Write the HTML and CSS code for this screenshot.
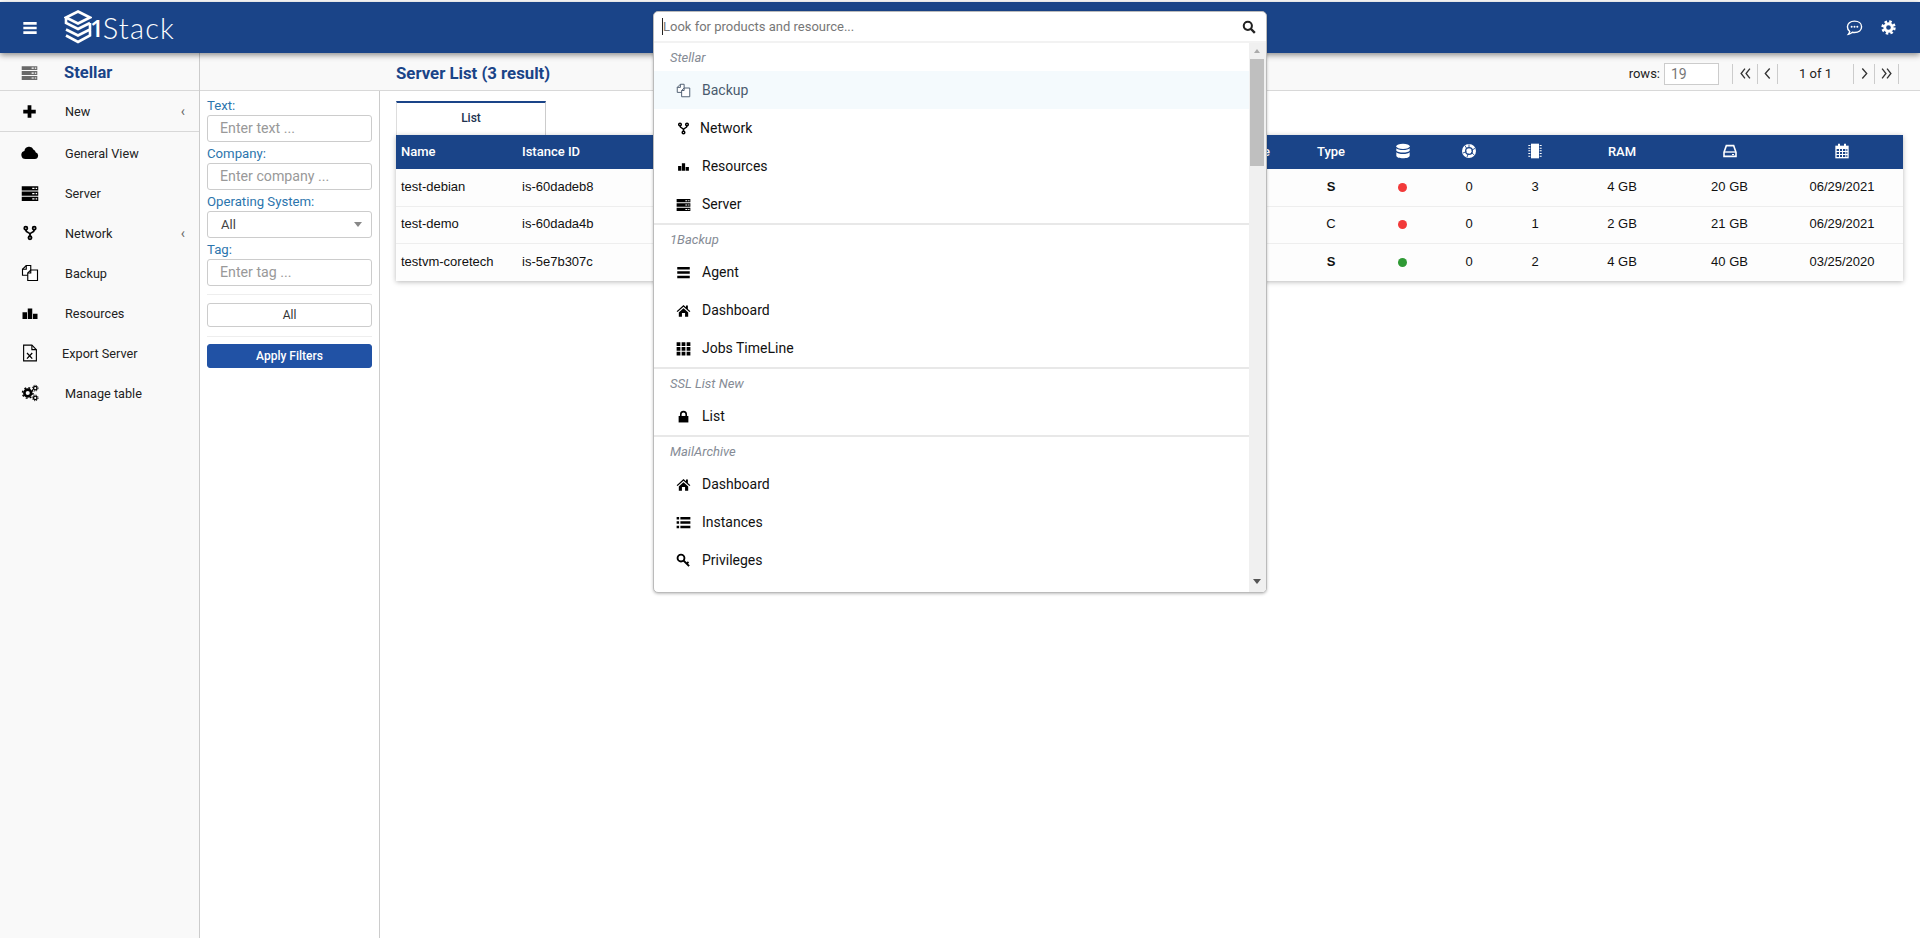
FILE: index.html
```html
<!DOCTYPE html>
<html lang="en">
<head>
<meta charset="utf-8">
<title>Server List</title>
<link rel="stylesheet" href="styles.css">
</head>
<body>
<svg class="sprite" xmlns="http://www.w3.org/2000/svg">
  <symbol id="i-server" viewBox="0 0 24 24"><path d="M1 3h22v5.500H1zM1 10h22v5.500H1zM1 17h22v5.500H1z" fill="currentColor"/><path d="M15 5h3v1.600h-3zM19.500 5h2v1.600h-2zM15 12h3v1.600h-3zM19.500 12h2v1.600h-2zM15 19h3v1.600h-3zM19.500 19h2v1.600h-2z" fill="#fff"/></symbol>
  <symbol id="i-plus" viewBox="0 0 24 24"><path d="M9 2h6v7h7v6h-7v7H9v-7H2V9h7z" fill="currentColor"/></symbol>
  <symbol id="i-cloud" viewBox="0 0 24 24"><path d="M6 20a5.500 5.500 0 0 1-1.500-10.800A6.500 6.500 0 0 1 16.800 7.500 4 4 0 0 1 19.500 11 4.600 4.600 0 0 1 18.500 20z" fill="currentColor"/></symbol>
  <symbol id="i-fork" viewBox="-3 -1 30 26"><g fill="none" stroke="currentColor" stroke-width="3"><circle cx="5" cy="4" r="2.600"/><circle cx="19" cy="4" r="2.600"/><circle cx="12" cy="20" r="2.600"/><path d="M5 6.500c0 6 7 3.500 7 8v3M19 6.500c0 6-7 3.500-7 8"/></g></symbol>
  <symbol id="i-copy" viewBox="0 0 24 24"><g fill="#fff" stroke="currentColor" stroke-width="1.500"><path d="M2 15V7l5-5h6v13z"/><path d="M7 2v5H2" fill="none"/><path d="M9 22V12l4-4h9v14z"/><path d="M13 8v4H9" fill="none"/></g></symbol>
  <symbol id="i-bars" viewBox="0 0 24 24"><path d="M2 11h6v9H2zM9 6h6v14H9zM16 13h6v7h-6z" fill="currentColor"/></symbol>
  <symbol id="i-excel" viewBox="0 0 24 24"><path d="M3.500 1.500h11l6 6v15h-17z" fill="none" stroke="currentColor" stroke-width="1.500"/><path d="M14.500 1.500v6h6" fill="none" stroke="currentColor" stroke-width="1.500"/><path d="M8 12l7 7.500M15 12l-7 7.500" stroke="currentColor" stroke-width="1.700"/></symbol>
  <symbol id="i-cogs" viewBox="0 0 24 24"><g fill="none" stroke="currentColor"><circle cx="9" cy="12" r="4.500" stroke-width="3.500"/><circle cx="9" cy="12" r="7" stroke-width="2" stroke-dasharray="2.500 3"/><circle cx="19" cy="5.500" r="2.300" stroke-width="1.800"/><circle cx="19" cy="5.500" r="3.800" stroke-width="1.300" stroke-dasharray="1.500 1.500"/><circle cx="19" cy="18.500" r="2.300" stroke-width="1.800"/><circle cx="19" cy="18.500" r="3.800" stroke-width="1.300" stroke-dasharray="1.500 1.500"/></g></symbol>
  <symbol id="i-menu" viewBox="0 0 24 24"><path d="M2 3h20v4H2zM2 10h20v4H2zM2 17h20v4H2z" fill="currentColor"/></symbol>
  <symbol id="i-search" viewBox="0 0 24 24"><circle cx="10" cy="10" r="7" fill="none" stroke="currentColor" stroke-width="3.500"/><path d="M15 15l7 7" stroke="currentColor" stroke-width="4"/></symbol>
  <symbol id="i-chat" viewBox="0 0 24 24"><path d="M12 3c6 0 10 3.400 10 8s-4 8-10 8c-1 0-2-.1-3-.3-1.300 1.300-3 2.300-5.500 2.800 1-1.300 1.600-2.500 1.800-3.900C3.500 16.200 2 13.800 2 11c0-4.600 4-8 10-8z" fill="none" stroke="currentColor" stroke-width="2"/><circle cx="8" cy="11" r="1.400" fill="currentColor"/><circle cx="12" cy="11" r="1.400" fill="currentColor"/><circle cx="16" cy="11" r="1.400" fill="currentColor"/></symbol>
  <symbol id="i-gear" viewBox="0 0 24 24"><circle cx="12" cy="12" r="6" fill="none" stroke="currentColor" stroke-width="4.500"/><circle cx="12" cy="12" r="9.500" fill="none" stroke="currentColor" stroke-width="4" stroke-dasharray="4 3.460"/></symbol>
  <symbol id="i-home" viewBox="0 0 24 24"><path d="M12 3L1 13l1.500 1.500L12 6l9.500 8.500L23 13l-4-3.600V4h-3v2.700z" fill="currentColor"/><path d="M4.500 15L12 8.500l7.500 6.500v7H14.500v-6h-5v6H4.500z" fill="currentColor"/></symbol>
  <symbol id="i-th" viewBox="0 0 24 24"><path d="M1 2h6v6H1zM9 2h6v6H9zM17 2h6v6h-6zM1 9.500h6v6H1zM9 9.500h6v6H9zM17 9.500h6v6h-6zM1 17h6v6H1zM9 17h6v6H9zM17 17h6v6h-6z" fill="currentColor"/></symbol>
  <symbol id="i-lock" viewBox="0 0 24 24"><path d="M7 11V8a5 5 0 0 1 10 0v3" fill="none" stroke="currentColor" stroke-width="3"/><path d="M3 11h18v12H3z" fill="currentColor"/></symbol>
  <symbol id="i-list" viewBox="0 0 24 24"><path d="M1 3h4v4H1zM7 3h16v4H7zM1 10h4v4H1zM7 10h16v4H7zM1 17h4v4H1zM7 17h16v4H7z" fill="currentColor"/></symbol>
  <symbol id="i-key" viewBox="0 0 24 24"><circle cx="8" cy="8" r="5.500" fill="none" stroke="currentColor" stroke-width="3"/><path d="M12 12l9 9M17 17l3-2.500" fill="none" stroke="currentColor" stroke-width="3"/></symbol>
  <symbol id="i-db" viewBox="0 0 24 24"><ellipse cx="12" cy="5" rx="10" ry="4" fill="currentColor"/><path d="M2 8c2 3.500 18 3.500 20 0v3.500c-2 3.500-18 3.500-20 0zM2 14c2 3.500 18 3.500 20 0v5c0 5-20 5-20 0z" fill="currentColor"/></symbol>
  <symbol id="i-disc" viewBox="0 0 24 24"><circle cx="12" cy="12" r="10.500" fill="currentColor"/><circle cx="12" cy="12" r="5" fill="none" stroke="#1a4488" stroke-width="2"/><path d="M12 2v6M21 8l-5 3M20 18l-5-4M9 21l2-5M3 15l5-2M6 4l3 5" stroke="#1a4488" stroke-width="1.300"/></symbol>
  <symbol id="i-chip" viewBox="0 0 24 24"><path d="M6 1h12v22H6z" fill="currentColor"/><path d="M2 3h3v1.500H2zM2 7h3v1.500H2zM2 11h3v1.500H2zM2 15h3v1.500H2zM2 19h3v1.500H2zM19 3h3v1.500h-3zM19 7h3v1.500h-3zM19 11h3v1.500h-3zM19 15h3v1.500h-3zM19 19h3v1.500h-3z" fill="currentColor"/></symbol>
  <symbol id="i-hdd" viewBox="0 0 24 24"><path d="M3 14L6.500 4h11L21 14v6H3z" fill="none" stroke="currentColor" stroke-width="2.400"/><path d="M3 13.500h18" stroke="currentColor" stroke-width="2"/><path d="M15 16.500h3v1.500h-3z" fill="currentColor"/></symbol>
  <symbol id="i-cal" viewBox="0 0 24 24"><path d="M2 4h20v19H2z" fill="currentColor"/><path d="M6 1h3v5H6zM15 1h3v5h-3z" fill="currentColor"/><path d="M4 9h3.500v3H4zM9 9h3v3H9zM13.500 9H17v3h-3.500zM18.500 9H20v3h-1.500zM4 13.500h3.500v3H4zM9 13.500h3v3H9zM13.500 13.500H17v3h-3.500zM18.500 13.500H20v3h-1.500zM4 18h3.500v3H4zM9 18h3v3H9zM13.500 18H17v3h-3.500zM18.500 18H20v3h-1.500z" fill="#1a4488"/></symbol>
  <symbol id="i-first" viewBox="0 0 10 10"><path d="M4.500 0.500L1 5l3.500 4.500M9 0.500L5.500 5 9 9.500" fill="none" stroke="currentColor" stroke-width="1.200"/></symbol>
  <symbol id="i-prev" viewBox="0 0 10 10"><path d="M7 0.500L3 5l4 4.500" fill="none" stroke="currentColor" stroke-width="1.200"/></symbol>
  <symbol id="i-next" viewBox="0 0 10 10"><path d="M3 0.500L7 5 3 9.500" fill="none" stroke="currentColor" stroke-width="1.200"/></symbol>
  <symbol id="i-last" viewBox="0 0 10 10"><path d="M1 0.500L4.500 5 1 9.500M5.500 0.500L9 5 5.500 9.500" fill="none" stroke="currentColor" stroke-width="1.200"/></symbol>
</svg>

<div class="app">
  <header class="topbar">
    <svg class="ico burger"><use href="#i-menu"/></svg>
    <div class="logo">
      <svg class="logo-mark" viewBox="0 0 28 35"><g fill="none" stroke="#fff" stroke-width="2.600"><path d="M14 1.500L26 7.500 14 13.500 2 7.500zM2 7.500V13L14 19 26 13M2 19.500L14 25.500 26 19.500V13M2 25.500L14 32 26 25.500V19.500"/></g></svg>
      <span class="logo-one">1</span><span class="logo-word">Stack</span>
    </div>
    <div class="topbar-actions">
      <svg class="ico action"><use href="#i-chat"/></svg>
      <svg class="ico action action-gear"><use href="#i-gear"/></svg>
    </div>
  </header>

  <div class="layout">
    <aside class="sidebar">
      <div class="side-head">
        <svg class="ico side-head-icon"><use href="#i-server"/></svg>
        <span class="side-title">Stellar</span>
      </div>
      <div class="nav-item nav-new">
        <svg class="ico nav-plus"><use href="#i-plus"/></svg>
        <span class="nav-label">New</span><span class="caret">&#8249;</span>
      </div>
      <nav class="nav-list">
        <div class="nav-item"><svg class="ico nav-icon"><use href="#i-cloud"/></svg><span class="nav-label">General View</span></div>
        <div class="nav-item"><svg class="ico nav-icon"><use href="#i-server"/></svg><span class="nav-label">Server</span></div>
        <div class="nav-item"><svg class="ico nav-icon"><use href="#i-fork"/></svg><span class="nav-label">Network</span><span class="caret">&#8249;</span></div>
        <div class="nav-item"><svg class="ico nav-icon"><use href="#i-copy"/></svg><span class="nav-label">Backup</span></div>
        <div class="nav-item"><svg class="ico nav-icon"><use href="#i-bars"/></svg><span class="nav-label">Resources</span></div>
        <div class="nav-item"><svg class="ico nav-icon"><use href="#i-excel"/></svg><span class="nav-label nav-label-tight">Export Server</span></div>
        <div class="nav-item"><svg class="ico nav-icon"><use href="#i-cogs"/></svg><span class="nav-label">Manage table</span></div>
      </nav>
    </aside>

    <main class="main">
      <div class="subbar">
        <h1 class="page-title">Server List (3 result)</h1>
        <div class="pager">
          <span class="rows-label">rows:</span>
          <input class="rows-input" value="19">
          <div class="pager-cells">
            <span class="cell cell-first"><svg class="ico chev"><use href="#i-first"/></svg></span>
            <span class="cell cell-prev"><svg class="ico chev"><use href="#i-prev"/></svg></span>
            <span class="cell cell-page">1 of 1</span>
            <span class="cell cell-next"><svg class="ico chev"><use href="#i-next"/></svg></span>
            <span class="cell cell-last"><svg class="ico chev"><use href="#i-last"/></svg></span>
          </div>
        </div>
      </div>

      <div class="workspace">
        <form class="filters">
          <label class="f-label">Text:</label>
          <input class="f-input" placeholder="Enter text ...">
          <label class="f-label">Company:</label>
          <input class="f-input" placeholder="Enter company ...">
          <label class="f-label">Operating System:</label>
          <div class="f-select">All<span class="f-arrow"></span></div>
          <label class="f-label">Tag:</label>
          <input class="f-input" placeholder="Enter tag ...">
          <div class="f-rule"></div>
          <div class="f-btn">All</div>
          <div class="f-rule f-rule-wide"></div>
          <div class="f-btn f-apply">Apply Filters</div>
        </form>

        <section class="content">
          <div class="tab">List</div>
          <table class="grid">
            <colgroup>
              <col class="c-name"><col class="c-id"><col class="c-hidden"><col class="c-zone"><col class="c-type"><col class="c-db"><col class="c-disc"><col class="c-cpu"><col class="c-ram"><col class="c-hdd"><col class="c-date">
            </colgroup>
            <thead>
              <tr>
                <th class="left">Name</th><th class="left">Istance ID</th><th></th><th class="right">Zone</th><th>Type</th>
                <th><svg class="ico th-icon"><use href="#i-db"/></svg></th>
                <th><svg class="ico th-icon"><use href="#i-disc"/></svg></th>
                <th><svg class="ico th-icon"><use href="#i-chip"/></svg></th>
                <th>RAM</th>
                <th><svg class="ico th-icon"><use href="#i-hdd"/></svg></th>
                <th><svg class="ico th-icon"><use href="#i-cal"/></svg></th>
              </tr>
            </thead>
            <tbody>
              <tr><td class="left">test-debian</td><td class="left">is-60dadeb8</td><td></td><td></td><td class="strong">S</td><td><span class="dot red"></span></td><td>0</td><td>3</td><td>4 GB</td><td>20 GB</td><td>06/29/2021</td></tr>
              <tr><td class="left">test-demo</td><td class="left">is-60dada4b</td><td></td><td></td><td>C</td><td><span class="dot red"></span></td><td>0</td><td>1</td><td>2 GB</td><td>21 GB</td><td>06/29/2021</td></tr>
              <tr><td class="left">testvm-coretech</td><td class="left">is-5e7b307c</td><td></td><td></td><td class="strong">S</td><td><span class="dot green"></span></td><td>0</td><td>2</td><td>4 GB</td><td>40 GB</td><td>03/25/2020</td></tr>
            </tbody>
          </table>
        </section>
      </div>
    </main>
  </div>

  <div class="finder">
    <div class="finder-bar">
      <span class="finder-caret"></span>
      <span class="finder-hint">Look for products and resource...</span>
      <svg class="ico finder-search"><use href="#i-search"/></svg>
    </div>
    <div class="finder-body">
      <div class="finder-list">
        <div class="group-label">Stellar</div>
        <div class="f-item f-item-active"><svg class="ico f-icon"><use href="#i-copy"/></svg><span>Backup</span></div>
        <div class="f-item f-item-tight"><svg class="ico f-icon"><use href="#i-fork"/></svg><span>Network</span></div>
        <div class="f-item"><svg class="ico f-icon f-icon-small"><use href="#i-bars"/></svg><span>Resources</span></div>
        <div class="f-item"><svg class="ico f-icon"><use href="#i-server"/></svg><span>Server</span></div>
        <div class="group-rule"></div>
        <div class="group-label">1Backup</div>
        <div class="f-item"><svg class="ico f-icon"><use href="#i-menu"/></svg><span>Agent</span></div>
        <div class="f-item"><svg class="ico f-icon"><use href="#i-home"/></svg><span>Dashboard</span></div>
        <div class="f-item"><svg class="ico f-icon"><use href="#i-th"/></svg><span>Jobs TimeLine</span></div>
        <div class="group-rule"></div>
        <div class="group-label">SSL List New</div>
        <div class="f-item"><svg class="ico f-icon f-icon-small"><use href="#i-lock"/></svg><span>List</span></div>
        <div class="group-rule"></div>
        <div class="group-label">MailArchive</div>
        <div class="f-item"><svg class="ico f-icon"><use href="#i-home"/></svg><span>Dashboard</span></div>
        <div class="f-item"><svg class="ico f-icon"><use href="#i-list"/></svg><span>Instances</span></div>
        <div class="f-item"><svg class="ico f-icon"><use href="#i-key"/></svg><span>Privileges</span></div>
      </div>
      <div class="scroll">
        <span class="scroll-up"></span>
        <span class="scroll-thumb"></span>
        <span class="scroll-down"></span>
      </div>
    </div>
  </div>
</div>
</body>
</html>
```
FILE: styles.css
```css
* { box-sizing: border-box; }
html, body { margin: 0; height: 938px; overflow: hidden; background: #fff; }
body { font-family: Roboto, "Liberation Sans", sans-serif; color: #111; }
.sprite { display: none; }
.ico { display: block; flex: none; color: #000; }

.app { position: relative; height: 938px; padding-top: 2px; display: flex; flex-direction: column; }

.topbar { height: 51px; flex: none; background: #1a4488; display: flex; align-items: center; box-shadow: 0 2px 6px rgba(0,0,0,.45); position: relative; z-index: 2; padding-left: 22px; }
.burger { width: 16px; height: 16px; color: #fff; }
.logo { display: flex; align-items: center; margin-left: 26px; color: #fff; }
.logo-mark { width: 28px; height: 35px; display: block; }
.logo-one { font: 600 24px/1 "Open Sans", sans-serif; margin-left: -2px; letter-spacing: -1px; }
.logo-word { font: 300 29px/1 Lato, sans-serif; letter-spacing: 1.2px; margin-left: 0; }
.topbar-actions { margin-left: auto; display: flex; align-items: center; gap: 18px; padding-right: 24px; }
.action { width: 17px; height: 17px; color: #fff; }
.action-gear { width: 15px; height: 15px; }

.layout { flex: 1; display: flex; min-height: 0; }
.sidebar { width: 200px; flex: none; background: #f9f9f9; border-right: 1px solid #ccc; }
.side-head { height: 38px; display: flex; align-items: center; padding: 2px 0 0 21px; border-bottom: 1px solid #d8d8d8; }
.side-head-icon { width: 17px; height: 17px; color: #6a6a6a; }
.side-title { margin-left: 26px; font-size: 16.500px; font-weight: 700; color: #1a4488; }
.nav-item { height: 40px; display: flex; align-items: center; padding-left: 21px; padding-right: 14px; font-size: 12.700px; color: #222; }
.nav-new { height: 41px; border-bottom: 1px solid #d8d8d8; }
.nav-new .nav-label { margin-left: 28px; }
.nav-list { padding-top: 1px; }
.nav-icon { width: 18px; height: 18px; }
.nav-plus { width: 15px; height: 15px; margin-left: 1px; }
.nav-label { margin-left: 26px; flex: 1; }
.nav-label-tight { margin-left: 23px; }
.caret { color: #666; font-size: 14px; line-height: 1; }

.main { flex: 1; min-width: 0; display: flex; flex-direction: column; }
.subbar { height: 38px; flex: none; display: flex; align-items: center; justify-content: space-between; background: #f9f9f9; border-bottom: 1px solid #d8d8d8; padding: 2px 0 0 196px; }
.page-title { margin: 0; font-size: 16.800px; font-weight: 700; color: #1a4488; }
.pager { display: flex; align-items: center; padding: 2px 21px 0 0; font-size: 13px; }
.rows-label { color: #222; }
.rows-input { width: 55px; height: 22px; margin-left: 4px; padding: 0 6px; border: 1px solid #ccc; font: 14px Roboto, sans-serif; color: #777; }
.pager-cells { display: flex; align-items: center; margin-left: 13px; height: 20px; border-right: 1px solid #ccc; }
.cell { height: 20px; display: flex; align-items: center; justify-content: center; border-left: 1px solid #ccc; color: #333; }
.cell-first { width: 25px; }
.cell-prev { width: 20px; }
.cell-page { width: 76px; font-size: 13px; color: #222; }
.cell-next { width: 21px; }
.cell-last { width: 24px; }
.chev { width: 11px; height: 11px; color: #333; }

.workspace { flex: 1; display: flex; min-height: 0; }
.filters { width: 180px; flex: none; border-right: 1px solid #ccc; padding: 6px 7px 0; display: flex; flex-direction: column; }
.f-label { display: block; height: 18px; line-height: 18px; font-size: 13.200px; color: #2c75ad; }
.f-input { width: 165px; height: 27px; flex: none; padding: 0 12px 1px; margin-bottom: 3px; border: 1px solid #ccc; border-radius: 3px; font: 14.200px Roboto, sans-serif; background: #fff; }
.f-input::placeholder { color: #999; opacity: 1; }
.f-select { position: relative; width: 165px; height: 27px; flex: none; margin-bottom: 3px; padding-left: 13px; border: 1px solid #ccc; border-radius: 3px; font-size: 13px; line-height: 25px; color: #444; }
.f-arrow { position: absolute; right: 9px; top: 10px; border-left: 4px solid transparent; border-right: 4px solid transparent; border-top: 5px solid #888; }
.f-rule { height: 1px; background: #eee; margin: 5px 0 8px; flex: none; }
.f-rule-wide { margin: 9px 0 7px; }
.f-btn { width: 165px; height: 24px; flex: none; border: 1px solid #ccc; border-radius: 3px; text-align: center; font-size: 12px; line-height: 22px; color: #333; background: #fff; }
.f-apply { background: #2152a5; border-color: #2152a5; color: #fff; font-weight: 500; }

.content { flex: 1; min-width: 0; padding: 10px 17px 0 16px; }
.tab { width: 150px; height: 34px; border-top: 2px solid #1a4488; border-left: 1px solid #ddd; border-right: 1px solid #ccc; text-align: center; font-size: 12px; font-weight: 500; line-height: 31px; color: #22324f; background: #fff; }
.grid { width: 1507px; border-collapse: collapse; table-layout: fixed; font: 13px "Liberation Sans", Arial, sans-serif; color: #111; box-shadow: 0 1px 5px rgba(0,0,0,.28); }
.c-name { width: 121px; }
.c-id { width: 200px; }
.c-hidden { width: 400px; }
.c-zone { width: 174px; }
.c-type { width: 80px; }
.c-db { width: 63px; }
.c-disc { width: 70px; }
.c-cpu { width: 62px; }
.c-ram { width: 112px; }
.c-hdd { width: 103px; }
.c-date { width: 122px; }
.grid th { height: 34px; background: #1a4488; color: #fff; font: 500 13px Roboto, sans-serif; text-align: center; padding: 0 0 2px; }
.grid td { height: 37px; text-align: center; padding: 0 0 2px; border-bottom: 1px solid #eee; background: #fdfdfd; }
.grid tbody tr:last-child td { border-bottom: 0; height: 38px; }
.grid .left { text-align: left; padding-left: 5px; }
.grid .right { text-align: right; padding-right: 21px; }
.strong { font-weight: 700; }
.th-icon { width: 16px; height: 16px; color: #fff; margin: 0 auto; }
.dot { display: inline-block; width: 9px; height: 9px; border-radius: 50%; vertical-align: -1px; }
.red { background: #f23a3a; }
.green { background: #2f9a35; }

.finder { position: absolute; left: 653px; top: 11px; width: 614px; height: 582px; background: #fff; border: 1px solid #bbb; border-radius: 5px; box-shadow: 0 1px 3px rgba(0,0,0,.25); z-index: 5; display: flex; flex-direction: column; overflow: hidden; }
.finder-bar { height: 31px; flex: none; display: flex; align-items: center; padding: 0 10px 0 8px; border-bottom: 2px solid #f2f2f2; position: relative; }
.finder-caret { width: 1px; height: 17px; background: #222; flex: none; }
.finder-hint { font-size: 13px; color: #777; }
.finder-search { width: 14px; height: 14px; margin-left: auto; color: #222; }
.finder-body { flex: 1; min-height: 0; display: flex; }
.finder-list { flex: 1; min-width: 0; overflow: hidden; }
.group-label { height: 28px; line-height: 30px; padding-left: 16px; font-size: 13px; font-style: italic; color: #858b95; }
.group-rule { height: 2px; background: #e8e8e8; }
.f-item { height: 38px; display: flex; align-items: center; padding-left: 22px; font-size: 14px; color: #111; }
.f-item span { margin-left: 11px; }
.f-item-active { background: #f4fafd; color: #4a5a6e; }
.f-item-active .f-icon { color: #4a5a6e; }
.f-item-tight span { margin-left: 9px; }
.f-icon { width: 15px; height: 15px; }
.f-icon-small { width: 13px; height: 13px; margin: 0 1px; }
.scroll { width: 17px; flex: none; background: #f0f0f0; position: relative; }
.scroll-thumb { position: absolute; left: 1px; right: 2px; top: 16px; height: 107px; background: #bfbfbf; }
.scroll-up { position: absolute; left: 5px; top: 6px; border-left: 3px solid transparent; border-right: 3px solid transparent; border-bottom: 4px solid #aaa; }
.scroll-down { position: absolute; left: 4px; bottom: 8px; border-left: 4px solid transparent; border-right: 4px solid transparent; border-top: 5px solid #555; }
```
